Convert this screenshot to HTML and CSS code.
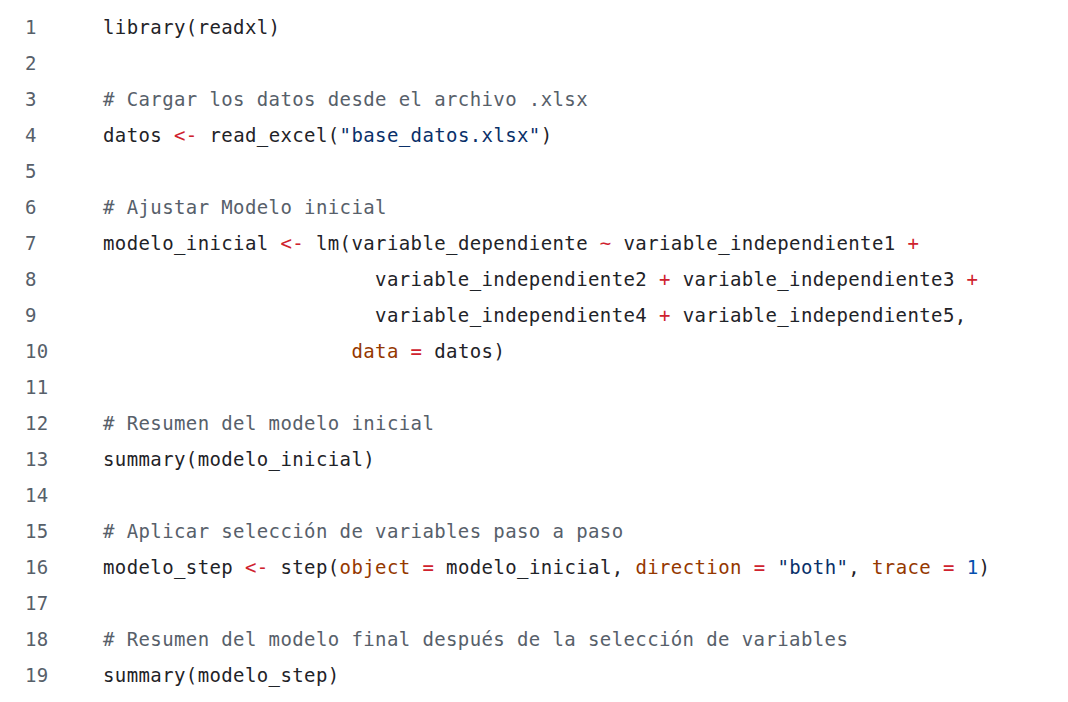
FILE: index.html
```html
<!DOCTYPE html>
<html lang="es">
<head>
<meta charset="utf-8">
<title>Código R</title>
<link rel="stylesheet" href="styles.css">
</head>
<body>
<div class="code">
<div class="ln">1</div><div class="src">library(readxl)</div>
<div class="ln">2</div><div class="src"></div>
<div class="ln">3</div><div class="src"><span class="c"># Cargar los datos desde el archivo .xlsx</span></div>
<div class="ln">4</div><div class="src">datos <span class="o">&lt;-</span> read_excel(<span class="s">"base_datos.xlsx"</span>)</div>
<div class="ln">5</div><div class="src"></div>
<div class="ln">6</div><div class="src"><span class="c"># Ajustar Modelo inicial</span></div>
<div class="ln">7</div><div class="src">modelo_inicial <span class="o">&lt;-</span> lm(variable_dependiente <span class="o">~</span> variable_independiente1 <span class="o">+</span></div>
<div class="ln">8</div><div class="src">                       variable_independiente2 <span class="o">+</span> variable_independiente3 <span class="o">+</span></div>
<div class="ln">9</div><div class="src">                       variable_independiente4 <span class="o">+</span> variable_independiente5,</div>
<div class="ln">10</div><div class="src">                     <span class="a">data</span> <span class="o">=</span> datos)</div>
<div class="ln">11</div><div class="src"></div>
<div class="ln">12</div><div class="src"><span class="c"># Resumen del modelo inicial</span></div>
<div class="ln">13</div><div class="src">summary(modelo_inicial)</div>
<div class="ln">14</div><div class="src"></div>
<div class="ln">15</div><div class="src"><span class="c"># Aplicar selección de variables paso a paso</span></div>
<div class="ln">16</div><div class="src">modelo_step <span class="o">&lt;-</span> step(<span class="a">object</span> <span class="o">=</span> modelo_inicial, <span class="a">direction</span> <span class="o">=</span> <span class="s">"both"</span>, <span class="a">trace</span> <span class="o">=</span> <span class="n">1</span>)</div>
<div class="ln">17</div><div class="src"></div>
<div class="ln">18</div><div class="src"><span class="c"># Resumen del modelo final después de la selección de variables</span></div>
<div class="ln">19</div><div class="src">summary(modelo_step)</div>
</div>
</body>
</html>
```
FILE: styles.css
```css
html, body {
  margin: 0;
  padding: 0;
  background: #ffffff;
}
.code {
  display: grid;
  grid-template-columns: 78px 1fr;
  padding: 9px 0 0 25px;
  font-family: "DejaVu Sans Mono", "Liberation Mono", monospace;
  font-size: 19px;
  letter-spacing: 0.39px;
  line-height: 36px;
  color: #1f2328;
}
.ln {
  color: #57606a;
  white-space: pre;
}
.src {
  white-space: pre;
  min-height: 36px;
}
.c { color: #57606a; }
.o { color: #cf222e; }
.s { color: #0a3069; }
.a { color: #953800; }
.n { color: #0550ae; }
```
